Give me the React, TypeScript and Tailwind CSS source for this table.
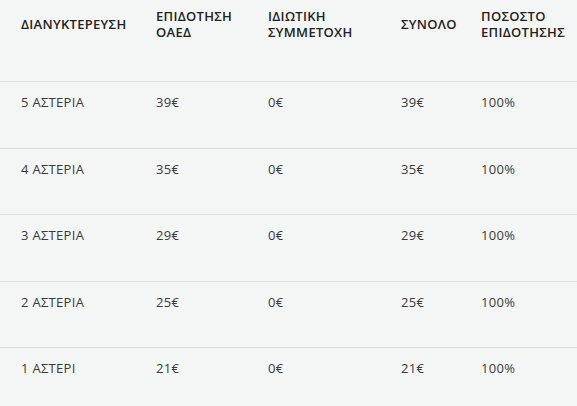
const rows = [
  { name: '5 ΑΣΤΕΡΙΑ', oaed: '39€', priv: '0€', total: '39€', pct: '100%' },
  { name: '4 ΑΣΤΕΡΙΑ', oaed: '35€', priv: '0€', total: '35€', pct: '100%' },
  { name: '3 ΑΣΤΕΡΙΑ', oaed: '29€', priv: '0€', total: '29€', pct: '100%' },
  { name: '2 ΑΣΤΕΡΙΑ', oaed: '25€', priv: '0€', total: '25€', pct: '100%' },
  { name: '1 ΑΣΤΕΡΙ', oaed: '21€', priv: '0€', total: '21€', pct: '100%' },
];

const cols = 'grid grid-cols-[156px_112px_133px_80px_1fr]';

export default function App() {
  return (
    <div
      className="w-[577px] h-[406px] overflow-hidden bg-[#f4f6f5] text-[13px] tracking-[0.3px]"
      style={{ fontFamily: '"Open Sans", "Noto Sans", sans-serif' }}
    >
      <div className={`${cols} h-[81px] font-semibold text-[#222] leading-[16px]`}>
        <div className="flex items-center pb-[33px] pl-[21px]">ΔΙΑΝΥΚΤΕΡΕΥΣΗ</div>
        <div className="flex items-center pb-[33px]">ΕΠΙΔΟΤΗΣΗ<br />ΟΑΕΔ</div>
        <div className="flex items-center pb-[33px]">ΙΔΙΩΤΙΚΗ<br />ΣΥΜΜΕΤΟΧΗ</div>
        <div className="flex items-center pb-[33px]">ΣΥΝΟΛΟ</div>
        <div className="flex items-center pb-[33px]">ΠΟΣΟΣΤΟ<br />ΕΠΙΔΟΤΗΣΗΣ</div>
      </div>
      {rows.map((r) => (
        <div
          key={r.name}
          className={`${cols} h-[66.5px] border-t border-[#d6e2de] pt-[12px] text-[#3a3a3a] leading-[16px]`}
        >
          <div className="pl-[21px]">{r.name}</div>
          <div>{r.oaed}</div>
          <div>{r.priv}</div>
          <div>{r.total}</div>
          <div>{r.pct}</div>
        </div>
      ))}
    </div>
  );
}
